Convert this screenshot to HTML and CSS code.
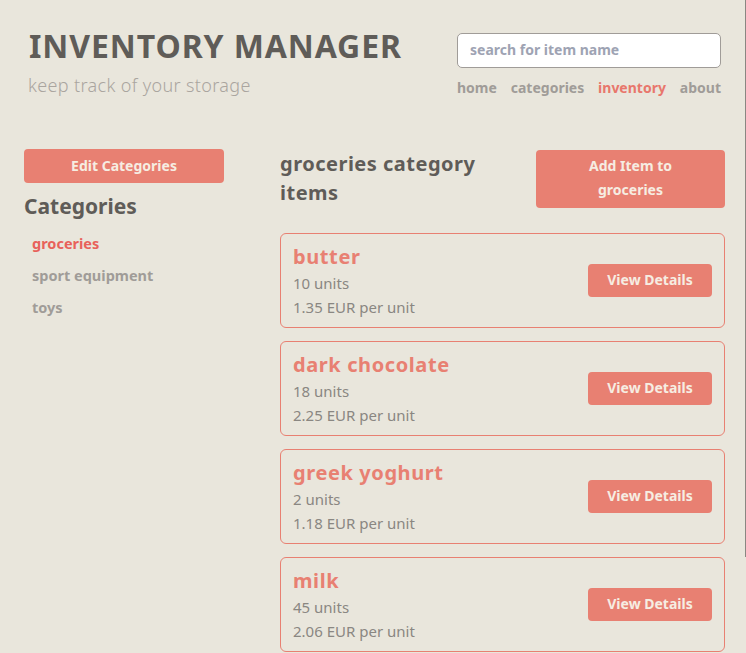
FILE: index.html
```html
<!DOCTYPE html>
<html lang="en">
<head>
<meta charset="utf-8">
<title>Inventory Manager</title>
<link rel="stylesheet" href="styles.css">
</head>
<body>
<div class="scroll-line"></div>
<header class="header">
  <div class="brand">
    <h1 class="title">INVENTORY MANAGER</h1>
    <p class="subtitle">keep track of your storage</p>
  </div>
  <div class="header-right">
    <input class="search" type="text" placeholder="search for item name">
    <nav class="nav">
      <a class="nav-link" href="#">home</a>
      <a class="nav-link" href="#">categories</a>
      <a class="nav-link active" href="#">inventory</a>
      <a class="nav-link" href="#">about</a>
    </nav>
  </div>
</header>
<div class="layout">
  <aside class="sidebar">
    <button class="btn btn-wide">Edit Categories</button>
    <h2 class="side-title">Categories</h2>
    <ul class="cat-list">
      <li class="cat active">groceries</li>
      <li class="cat">sport equipment</li>
      <li class="cat">toys</li>
    </ul>
  </aside>
  <main class="content">
    <div class="content-head">
      <h2 class="content-title">groceries category items</h2>
      <button class="btn btn-add">Add Item to groceries</button>
    </div>
    <div class="cards">
      <div class="card">
        <div class="card-info">
          <h3 class="item-name">butter</h3>
          <div class="item-meta">10 units</div>
          <div class="item-meta">1.35 EUR per unit</div>
        </div>
        <button class="btn btn-details">View Details</button>
      </div>
      <div class="card">
        <div class="card-info">
          <h3 class="item-name">dark chocolate</h3>
          <div class="item-meta">18 units</div>
          <div class="item-meta">2.25 EUR per unit</div>
        </div>
        <button class="btn btn-details">View Details</button>
      </div>
      <div class="card">
        <div class="card-info">
          <h3 class="item-name">greek yoghurt</h3>
          <div class="item-meta">2 units</div>
          <div class="item-meta">1.18 EUR per unit</div>
        </div>
        <button class="btn btn-details">View Details</button>
      </div>
      <div class="card">
        <div class="card-info">
          <h3 class="item-name">milk</h3>
          <div class="item-meta">45 units</div>
          <div class="item-meta">2.06 EUR per unit</div>
        </div>
        <button class="btn btn-details">View Details</button>
      </div>
    </div>
  </main>
</div>
</body>
</html>
```
FILE: styles.css
```css
* { box-sizing: border-box; }
html, body { margin: 0; padding: 0; }
body {
  background: #e9e6dc;
  font-family: "Noto Sans", "Open Sans", sans-serif;
  color: #5f5c58;
  overflow: hidden;
  height: 653px;
}
.scroll-line {
  position: fixed;
  right: 0;
  top: 0;
  width: 1px;
  height: 557px;
  background: #8a8782;
}
.header {
  display: flex;
  justify-content: space-between;
  padding: 26px 25px 0 29px;
}
.title {
  margin: 0;
  font-family: "Noto Sans", sans-serif;
  font-weight: 700;
  font-size: 32px;
  line-height: 40px;
  letter-spacing: 0.9px;
  color: #5f5c58;
}
.subtitle {
  margin: 7px 0 0 -1px;
  font-family: "Noto Sans", sans-serif;
  font-weight: 300;
  font-size: 18px;
  line-height: 24px;
  letter-spacing: 0.35px;
  color: #aaa59f;
}
.header-right {
  width: 264px;
  padding-top: 7px;
}
.search {
  display: block;
  width: 264px;
  height: 35px;
  border: 1px solid #a09c98;
  border-radius: 5px;
  background: #fff;
  padding: 0 12px 2px;
  font-family: "Noto Sans", sans-serif;
  font-weight: 700;
  font-size: 14px;
  color: #5f5c58;
  outline: none;
}
.search::placeholder { color: #9ea3b3; }
.nav {
  display: flex;
  justify-content: space-between;
  margin-top: 9px;
}
.nav-link {
  font-weight: 700;
  font-size: 14px;
  line-height: 22px;
  color: #a09c98;
  text-decoration: none;
}
.nav-link.active { color: #e8776c; }
.layout {
  display: grid;
  grid-template-columns: 200px 1fr;
  column-gap: 56px;
  padding: 0 21px 0 24px;
  margin-top: 50px;
}
.btn {
  border: none;
  background: #e88072;
  color: #f6ede2;
  font-family: "Noto Sans", sans-serif;
  font-weight: 700;
  font-size: 14px;
  border-radius: 4px;
  padding-bottom: 3px;
  cursor: pointer;
}
.btn-wide {
  display: block;
  width: 200px;
  height: 34px;
}
.side-title {
  margin: 9px 0 0;
  font-size: 21px;
  line-height: 28px;
  font-weight: 700;
  color: #5f5c58;
}
.cat-list {
  list-style: none;
  margin: 7px 0 0;
  padding: 0 0 0 8px;
}
.cat {
  font-size: 14.5px;
  font-weight: 700;
  line-height: 32px;
  color: #a09c98;
}
.cat.active { color: #e8615a; }
.content-head {
  display: flex;
  justify-content: space-between;
  align-items: flex-start;
}
.content-title {
  margin: 0;
  width: 220px;
  font-size: 20px;
  line-height: 29px;
  letter-spacing: 0.5px;
  font-weight: 700;
  color: #5f5c58;
}
.btn-add {
  width: 189px;
  height: 58px;
  padding: 0 24px 2px;
  line-height: 24px;
  margin-top: 1px;
}
.cards {
  display: flex;
  flex-direction: column;
  gap: 13px;
  margin-top: 25px;
}
.card {
  display: flex;
  align-items: center;
  justify-content: space-between;
  height: 95px;
  border: 1px solid #e88072;
  border-radius: 6px;
  padding: 0 12px 0 12px;
}
.item-name {
  margin: 0;
  font-size: 20px;
  line-height: 28px;
  letter-spacing: 0.6px;
  font-weight: 700;
  color: #e88072;
}
.item-meta {
  font-size: 15px;
  line-height: 24px;
  color: #8a8782;
}
.btn-details {
  width: 124px;
  height: 33px;
}
```
